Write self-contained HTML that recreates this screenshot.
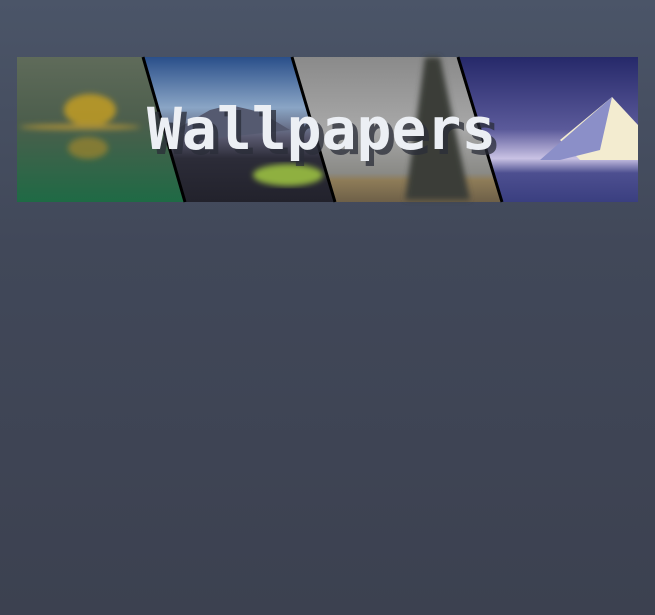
<!DOCTYPE html><html><head><style>
html,body{margin:0;width:655px;height:615px;overflow:hidden;background:linear-gradient(#4b5568,#414859 40%,#3c4150);}
</style></head><body>
<svg width="655" height="615" style="position:absolute;left:0;top:0">
<defs>
<linearGradient id="g1" x1="0" y1="0" x2="0" y2="1"><stop offset="0" stop-color="#5f6b5a"/><stop offset=".45" stop-color="#4c5e4c"/><stop offset="1" stop-color="#1f6a45"/></linearGradient>
<linearGradient id="g2" x1="0" y1="0" x2="0" y2="1"><stop offset="0" stop-color="#2a4f8a"/><stop offset=".35" stop-color="#8aa5c5"/><stop offset=".55" stop-color="#5a5a70"/><stop offset=".7" stop-color="#2c2c38"/><stop offset="1" stop-color="#22222c"/></linearGradient>
<linearGradient id="g3" x1="0" y1="0" x2="0" y2="1"><stop offset="0" stop-color="#8a8a8a"/><stop offset=".5" stop-color="#a8a8a8"/><stop offset=".8" stop-color="#8a8a86"/><stop offset=".85" stop-color="#8e7c58"/><stop offset="1" stop-color="#6e6048"/></linearGradient>
<linearGradient id="g4" x1="0" y1="0" x2="0" y2="1"><stop offset="0" stop-color="#26296a"/><stop offset=".5" stop-color="#5b5a9a"/><stop offset=".7" stop-color="#c9c2e4"/><stop offset=".8" stop-color="#4d4f90"/><stop offset="1" stop-color="#3a3f80"/></linearGradient>
<filter id="b"><feGaussianBlur stdDeviation="3"/></filter>
</defs>
<polygon points="17,57 143,57 185,202 17,202" fill="url(#g1)"/>
<g filter="url(#b)">
<ellipse cx="90" cy="110" rx="26" ry="16" fill="#c9a020" opacity=".8"/>
<ellipse cx="80" cy="127" rx="60" ry="3" fill="#a08a3a"/>
<ellipse cx="88" cy="148" rx="20" ry="11" fill="#b08c2a" opacity=".6"/>
</g>
<polygon points="143,57 292,57 335,202 185,202" fill="url(#g2)"/>
<polygon points="175,130 210,110 230,105 260,112 290,130 200,140" fill="#555a70"/>
<ellipse cx="288" cy="175" rx="35" ry="11" fill="#8fb040" filter="url(#b)"/>
<polygon points="292,57 458,57 502,202 335,202" fill="url(#g3)"/>
<polygon points="425,57 440,57 470,200 405,200 415,130" fill="#3a3d38" filter="url(#b)"/>
<polygon points="458,57 638,57 638,202 502,202" fill="url(#g4)"/>
<polygon points="560,140 612,97 638,125 638,160 580,160" fill="#f3ecd0"/>
<polygon points="612,97 600,150 560,160 540,160" fill="#8b8fc8"/>
<path d="M143 57L185 202M292 57L335 202M458 57L502 202" stroke="#000" stroke-width="3"/>
<text x="152" y="154" font-family="DejaVu Sans Mono,monospace" font-weight="bold" font-size="58" fill="#2a2d38" opacity=".75">Wallpapers</text>
<text x="147" y="149" font-family="DejaVu Sans Mono,monospace" font-weight="bold" font-size="58" fill="#eceff4">Wallpapers</text>
</svg>
</body></html>
